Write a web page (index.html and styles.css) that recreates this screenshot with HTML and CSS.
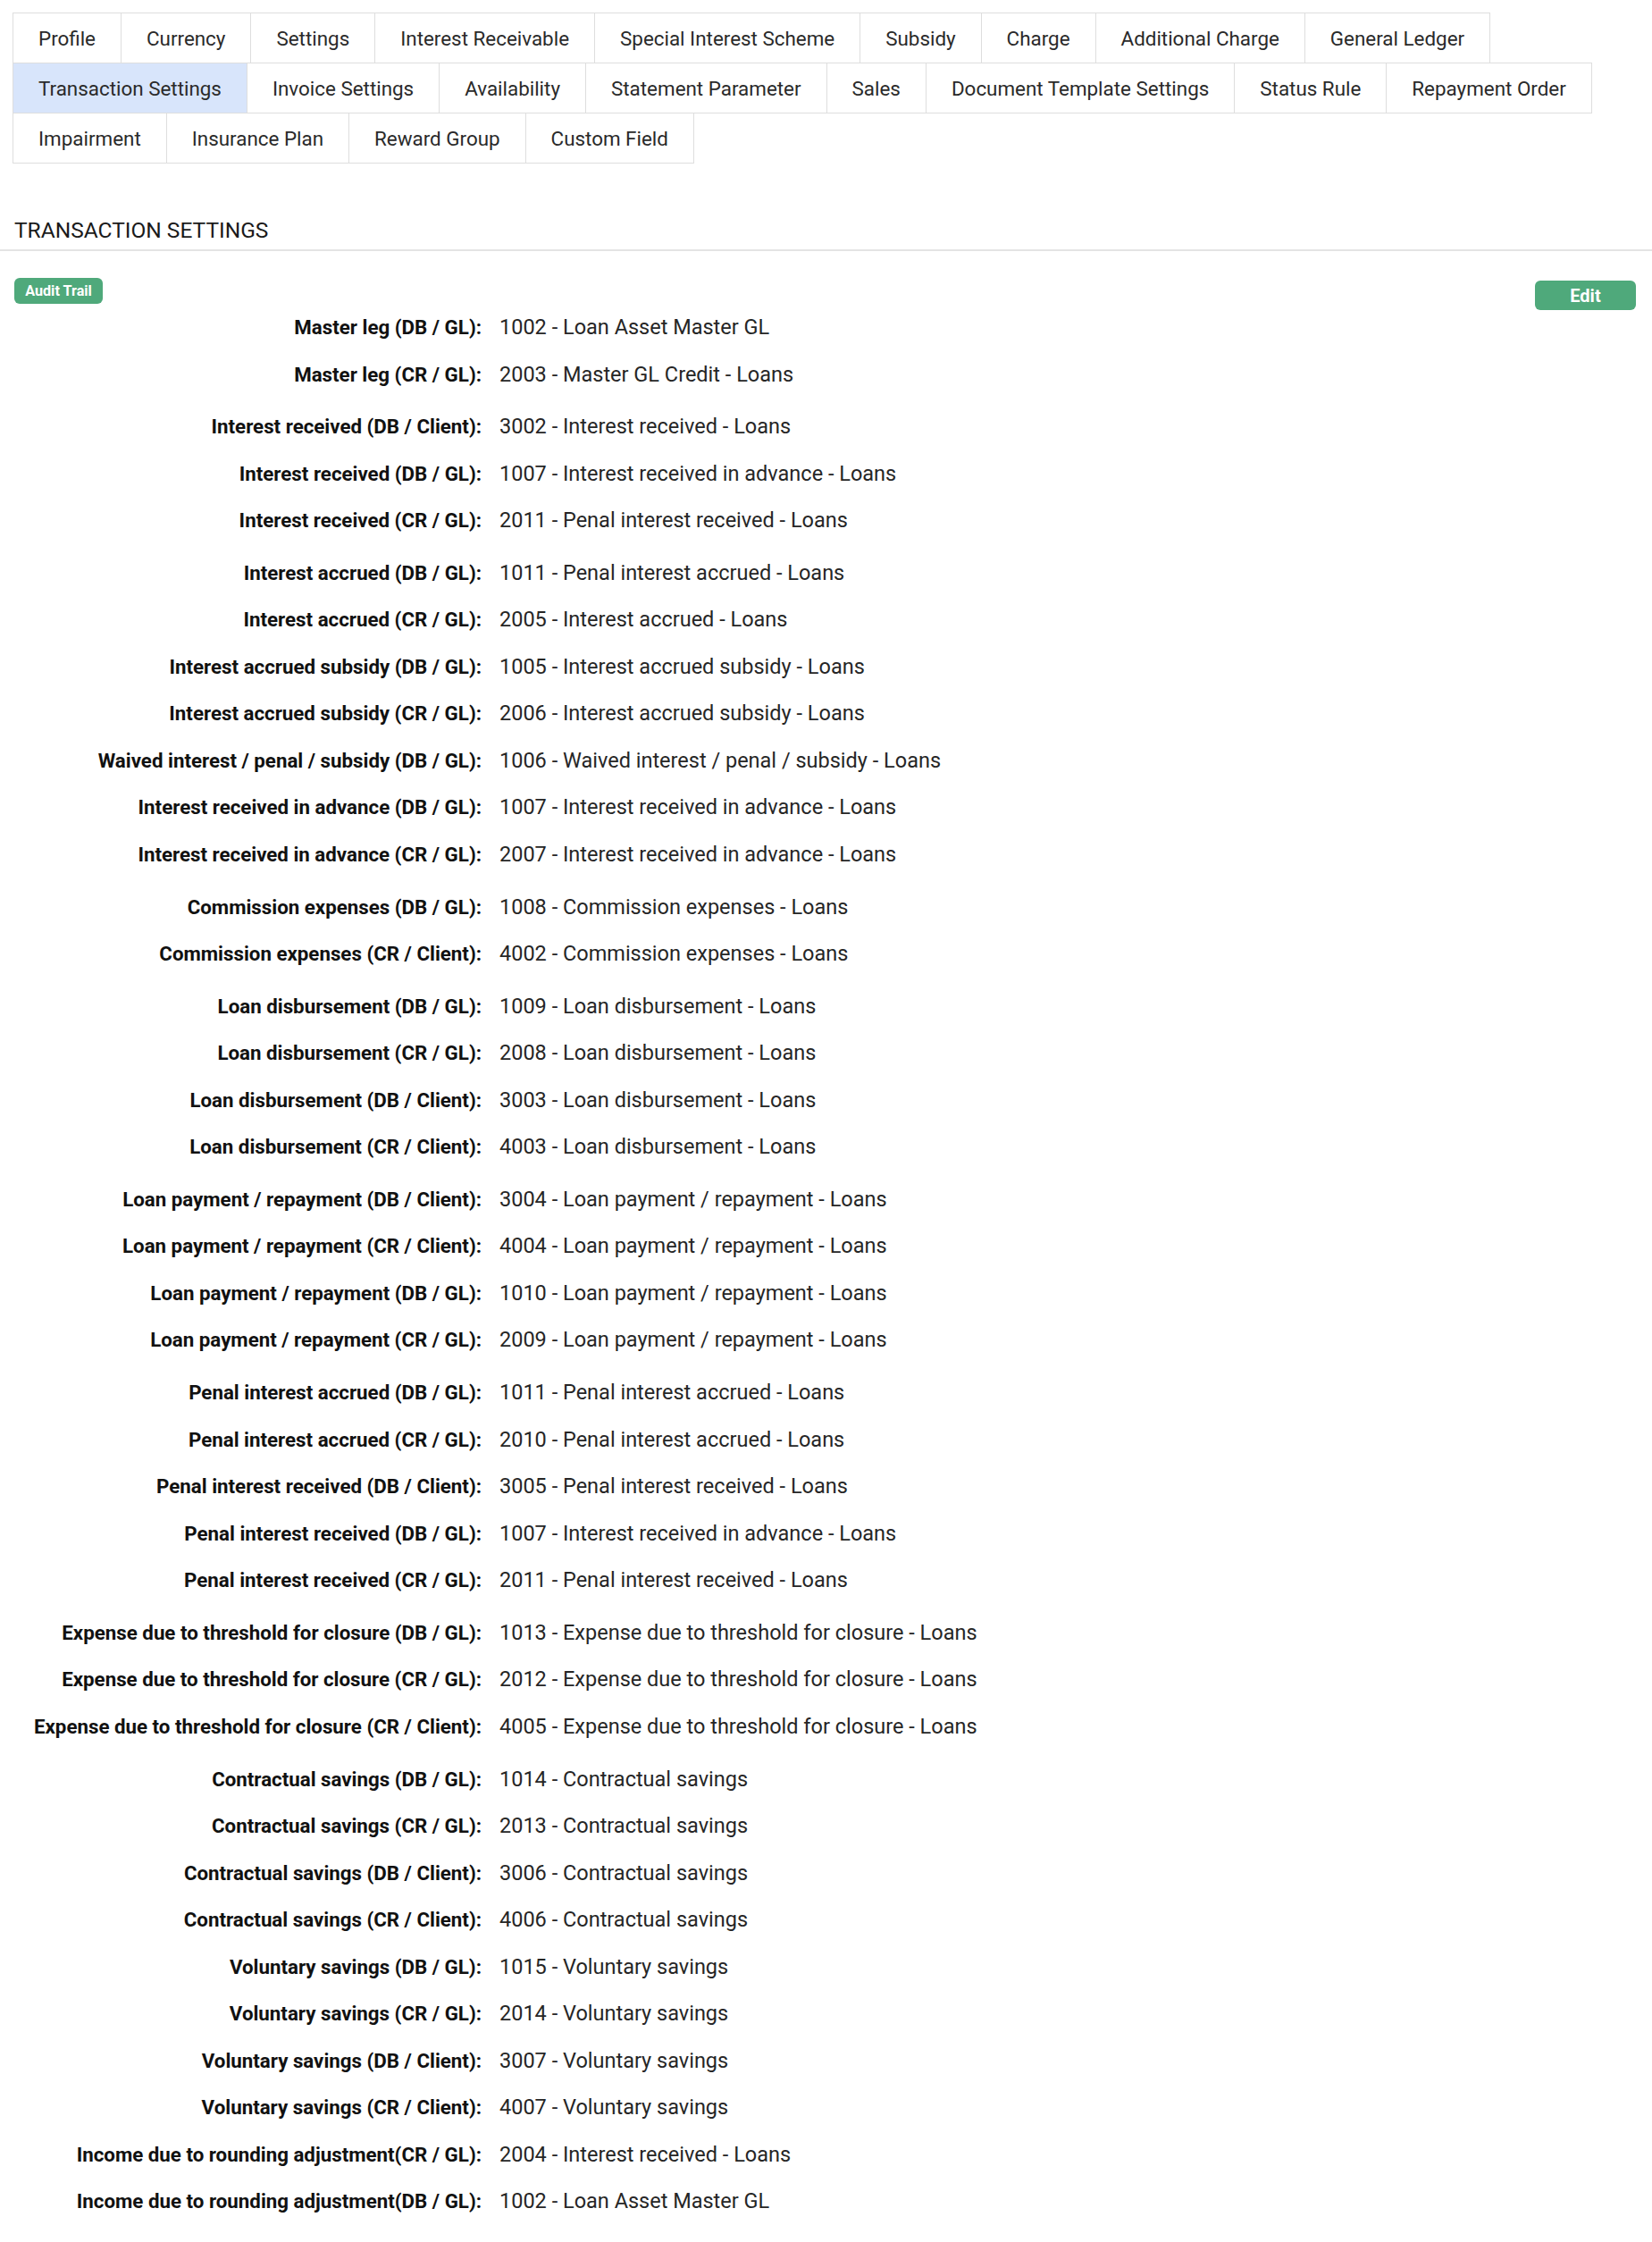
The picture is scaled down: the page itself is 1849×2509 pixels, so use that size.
FILE: index.html
```html
<!DOCTYPE html>
<html lang="en">
<head>
<meta charset="utf-8">
<title>Transaction Settings</title>
<link rel="stylesheet" href="styles.css">
</head>
<body>
<nav class="tabs">
  <a class="tab">Profile</a>
  <a class="tab">Currency</a>
  <a class="tab">Settings</a>
  <a class="tab">Interest Receivable</a>
  <a class="tab">Special Interest Scheme</a>
  <a class="tab">Subsidy</a>
  <a class="tab">Charge</a>
  <a class="tab">Additional Charge</a>
  <a class="tab">General Ledger</a>
  <a class="tab active">Transaction Settings</a>
  <a class="tab">Invoice Settings</a>
  <a class="tab">Availability</a>
  <a class="tab">Statement Parameter</a>
  <a class="tab">Sales</a>
  <a class="tab">Document Template Settings</a>
  <a class="tab">Status Rule</a>
  <a class="tab">Repayment Order</a>
  <a class="tab">Impairment</a>
  <a class="tab">Insurance Plan</a>
  <a class="tab">Reward Group</a>
  <a class="tab">Custom Field</a>
</nav>

<header class="section-head">
  <h1 class="section-title">TRANSACTION SETTINGS</h1>
</header>

<main class="content">
  <div class="toolbar">
    <button class="btn btn-audit">Audit Trail</button>
    <button class="btn btn-edit">Edit</button>
  </div>

  <div class="group">
    <div class="row"><span class="label">Master leg (DB / GL):</span><span class="value">1002 - Loan Asset Master GL</span></div>
    <div class="row"><span class="label">Master leg (CR / GL):</span><span class="value">2003 - Master GL Credit - Loans</span></div>
  </div>

  <div class="group">
    <div class="row"><span class="label">Interest received (DB / Client):</span><span class="value">3002 - Interest received - Loans</span></div>
    <div class="row"><span class="label">Interest received (DB / GL):</span><span class="value">1007 - Interest received in advance - Loans</span></div>
    <div class="row"><span class="label">Interest received (CR / GL):</span><span class="value">2011 - Penal interest received - Loans</span></div>
  </div>

  <div class="group">
    <div class="row"><span class="label">Interest accrued (DB / GL):</span><span class="value">1011 - Penal interest accrued - Loans</span></div>
    <div class="row"><span class="label">Interest accrued (CR / GL):</span><span class="value">2005 - Interest accrued - Loans</span></div>
    <div class="row"><span class="label">Interest accrued subsidy (DB / GL):</span><span class="value">1005 - Interest accrued subsidy - Loans</span></div>
    <div class="row"><span class="label">Interest accrued subsidy (CR / GL):</span><span class="value">2006 - Interest accrued subsidy - Loans</span></div>
    <div class="row"><span class="label">Waived interest / penal / subsidy (DB / GL):</span><span class="value">1006 - Waived interest / penal / subsidy - Loans</span></div>
    <div class="row"><span class="label">Interest received in advance (DB / GL):</span><span class="value">1007 - Interest received in advance - Loans</span></div>
    <div class="row"><span class="label">Interest received in advance (CR / GL):</span><span class="value">2007 - Interest received in advance - Loans</span></div>
  </div>

  <div class="group">
    <div class="row"><span class="label">Commission expenses (DB / GL):</span><span class="value">1008 - Commission expenses - Loans</span></div>
    <div class="row"><span class="label">Commission expenses (CR / Client):</span><span class="value">4002 - Commission expenses - Loans</span></div>
  </div>

  <div class="group">
    <div class="row"><span class="label">Loan disbursement (DB / GL):</span><span class="value">1009 - Loan disbursement - Loans</span></div>
    <div class="row"><span class="label">Loan disbursement (CR / GL):</span><span class="value">2008 - Loan disbursement - Loans</span></div>
    <div class="row"><span class="label">Loan disbursement (DB / Client):</span><span class="value">3003 - Loan disbursement - Loans</span></div>
    <div class="row"><span class="label">Loan disbursement (CR / Client):</span><span class="value">4003 - Loan disbursement - Loans</span></div>
  </div>

  <div class="group">
    <div class="row"><span class="label">Loan payment / repayment (DB / Client):</span><span class="value">3004 - Loan payment / repayment - Loans</span></div>
    <div class="row"><span class="label">Loan payment / repayment (CR / Client):</span><span class="value">4004 - Loan payment / repayment - Loans</span></div>
    <div class="row"><span class="label">Loan payment / repayment (DB / GL):</span><span class="value">1010 - Loan payment / repayment - Loans</span></div>
    <div class="row"><span class="label">Loan payment / repayment (CR / GL):</span><span class="value">2009 - Loan payment / repayment - Loans</span></div>
  </div>

  <div class="group">
    <div class="row"><span class="label">Penal interest accrued (DB / GL):</span><span class="value">1011 - Penal interest accrued - Loans</span></div>
    <div class="row"><span class="label">Penal interest accrued (CR / GL):</span><span class="value">2010 - Penal interest accrued - Loans</span></div>
    <div class="row"><span class="label">Penal interest received (DB / Client):</span><span class="value">3005 - Penal interest received - Loans</span></div>
    <div class="row"><span class="label">Penal interest received (DB / GL):</span><span class="value">1007 - Interest received in advance - Loans</span></div>
    <div class="row"><span class="label">Penal interest received (CR / GL):</span><span class="value">2011 - Penal interest received - Loans</span></div>
  </div>

  <div class="group">
    <div class="row"><span class="label">Expense due to threshold for closure (DB / GL):</span><span class="value">1013 - Expense due to threshold for closure - Loans</span></div>
    <div class="row"><span class="label">Expense due to threshold for closure (CR / GL):</span><span class="value">2012 - Expense due to threshold for closure - Loans</span></div>
    <div class="row"><span class="label">Expense due to threshold for closure (CR / Client):</span><span class="value">4005 - Expense due to threshold for closure - Loans</span></div>
  </div>

  <div class="group">
    <div class="row"><span class="label">Contractual savings (DB / GL):</span><span class="value">1014 - Contractual savings</span></div>
    <div class="row"><span class="label">Contractual savings (CR / GL):</span><span class="value">2013 - Contractual savings</span></div>
    <div class="row"><span class="label">Contractual savings (DB / Client):</span><span class="value">3006 - Contractual savings</span></div>
    <div class="row"><span class="label">Contractual savings (CR / Client):</span><span class="value">4006 - Contractual savings</span></div>
    <div class="row"><span class="label">Voluntary savings (DB / GL):</span><span class="value">1015 - Voluntary savings</span></div>
    <div class="row"><span class="label">Voluntary savings (CR / GL):</span><span class="value">2014 - Voluntary savings</span></div>
    <div class="row"><span class="label">Voluntary savings (DB / Client):</span><span class="value">3007 - Voluntary savings</span></div>
    <div class="row"><span class="label">Voluntary savings (CR / Client):</span><span class="value">4007 - Voluntary savings</span></div>
    <div class="row"><span class="label">Income due to rounding adjustment(CR / GL):</span><span class="value">2004 - Interest received - Loans</span></div>
    <div class="row"><span class="label">Income due to rounding adjustment(DB / GL):</span><span class="value">1002 - Loan Asset Master GL</span></div>
  </div>
</main>
</body>
</html>
```

FILE: styles.css
```css
* {
  box-sizing: border-box;
}

html, body {
  margin: 0;
  padding: 0;
  background: #ffffff;
}

body {
  font-family: Roboto, "Liberation Sans", Arial, sans-serif;
  color: #222222;
}

/* ---------- Tabs ---------- */
.tabs {
  display: flex;
  flex-wrap: wrap;
  padding: 14px 14px 0 14px;
  width: 1849px;
}

.tab {
  display: flex;
  align-items: center;
  height: 57px;
  padding: 0 28px;
  margin: 0 -1px -1px 0;
  border: 1px solid #dedede;
  font-size: 22.4px;
  color: #2a2a2a;
  white-space: nowrap;
  background: #ffffff;
}

.tab.active {
  background: #d8e5fb;
  border-color: #dedede;
}

/* ---------- Section header ---------- */
.section-head {
  margin-top: 61px;
  padding: 0 0 6px 16px;
  border-bottom: 2px solid #e4e4e4;
}

.section-title {
  margin: 0;
  font-size: 24.5px;
  line-height: 30px;
  font-weight: 400;
  color: #1a1a1a;
}

/* ---------- Content ---------- */
.content {
  padding: 30px 18px 20px 16px;
}

.toolbar {
  display: flex;
  justify-content: space-between;
  align-items: flex-start;
  height: 29px;
}

.btn {
  border: 0;
  color: #ffffff;
  background: #4fa97b;
  font-family: Roboto, "Liberation Sans", Arial, sans-serif;
  cursor: pointer;
}

.btn-audit {
  width: 99px;
  height: 29px;
  border-radius: 6px;
  font-size: 16.2px;
  font-weight: 700;
  padding: 0;
}

.btn-edit {
  width: 113px;
  height: 33px;
  margin-top: 3px;
  border-radius: 6px;
  font-size: 20px;
  font-weight: 700;
  padding: 0;
}

.group + .group {
  margin-top: 6.2px;
}

.row {
  display: grid;
  grid-template-columns: 523px 1fr;
  column-gap: 20px;
  height: 52.5px;
  align-items: center;
  line-height: 52.5px;
}

.label {
  text-align: right;
  font-weight: 700;
  font-size: 22.3px;
  color: #111111;
  white-space: nowrap;
}

.value {
  font-size: 23.5px;
  color: #262626;
  white-space: nowrap;
}
```
